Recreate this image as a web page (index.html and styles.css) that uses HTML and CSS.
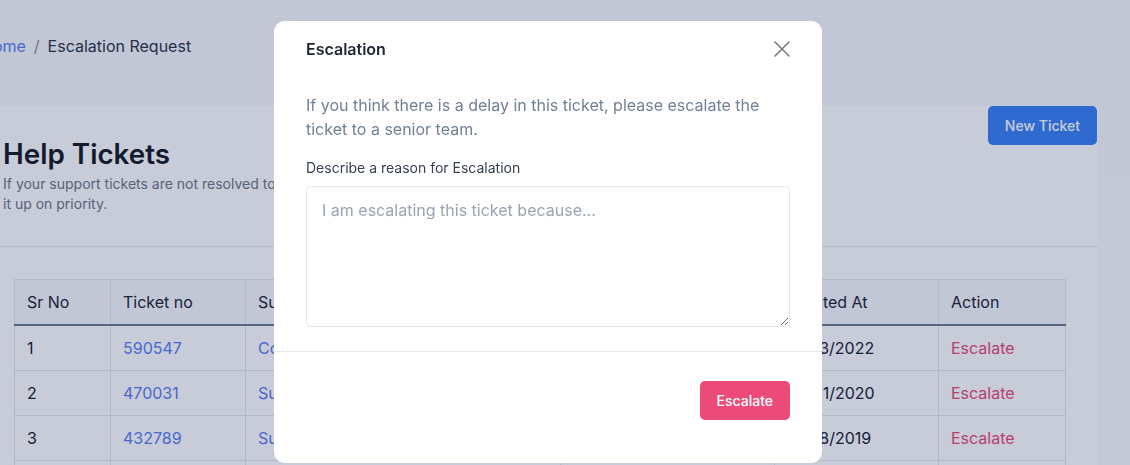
FILE: index.html
```html
<!DOCTYPE html>
<html lang="en">
<head>
<meta charset="utf-8">
<title>Escalation Request</title>
<link rel="stylesheet" href="styles.css">
</head>
<body>
<div class="page">
  <nav class="breadcrumb">
    <a class="crumb-link" href="#">Home</a><span class="crumb-sep">/</span><span class="crumb-current">Escalation Request</span>
  </nav>
  <div class="main">
    <section class="card">
      <header class="card-header">
        <div class="card-titles">
          <h1 class="card-title">Help Tickets</h1>
          <p class="card-sub">If your support tickets are not resolved to your satisfaction, escalate them and our team will pick<br>it up on priority.</p>
        </div>
        <button class="btn btn-blue" type="button">New Ticket</button>
      </header>
      <div class="table-wrap">
        <table class="tickets">
          <colgroup>
            <col class="c-sr"><col class="c-no"><col class="c-subj"><col class="c-status"><col class="c-date"><col class="c-act">
          </colgroup>
          <thead>
            <tr><th>Sr No</th><th>Ticket no</th><th>Subject</th><th>Status</th><th>Created At</th><th>Action</th></tr>
          </thead>
          <tbody>
            <tr><td>1</td><td><a class="link" href="#">590547</a></td><td><a class="link" href="#">Could not access my account</a></td><td>Open</td><td>12/03/2022</td><td><a class="link-pink" href="#">Escalate</a></td></tr>
            <tr><td>2</td><td><a class="link" href="#">470031</a></td><td><a class="link" href="#">Subscription not renewed</a></td><td>Open</td><td>24/01/2020</td><td><a class="link-pink" href="#">Escalate</a></td></tr>
            <tr><td>3</td><td><a class="link" href="#">432789</a></td><td><a class="link" href="#">Support for invoice export</a></td><td>Open</td><td>16/08/2019</td><td><a class="link-pink" href="#">Escalate</a></td></tr>
            <tr class="row-empty"><td></td><td></td><td></td><td></td><td></td><td></td></tr>
          </tbody>
        </table>
      </div>
    </section>
    <div class="side"></div>
  </div>
</div>

<div class="overlay"></div>

<div class="modal" role="dialog" aria-labelledby="modal-title">
  <div class="modal-header">
    <h2 class="modal-title" id="modal-title">Escalation</h2>
    <button class="modal-close" type="button" aria-label="Close">
      <svg width="16" height="16" viewBox="0 0 16 16"><path d="M1 1 L15 15 M15 1 L1 15" stroke="#777b82" stroke-width="1.6" stroke-linecap="round" fill="none"/></svg>
    </button>
  </div>
  <div class="modal-body">
    <p class="modal-text">If you think there is a delay in this ticket, please escalate the ticket to a senior team.</p>
    <label class="field-label" for="reason">Describe a reason for Escalation</label>
    <textarea class="field" id="reason" placeholder="I am escalating this ticket because..."></textarea>
  </div>
  <div class="modal-footer">
    <button class="btn btn-pink" type="button">Escalate</button>
  </div>
</div>
</body>
</html>
```
FILE: styles.css
```css
* { box-sizing: border-box; }

html, body {
  margin: 0;
  padding: 0;
  height: 100%;
  overflow: hidden;
}

body {
  font-family: Inter, "Noto Sans", "Liberation Sans", sans-serif;
  background: #f7f9fb;
  color: #1a202c;
}

.page {
  margin-left: -32px;
  width: 1162px;
}

/* breadcrumb */
.breadcrumb {
  height: 106px;
  padding: 34px 0 0 13px;
  font-size: 16px;
  line-height: 24px;
}
.crumb-link { color: #5b7ef2; text-decoration: none; }
.crumb-sep { color: #8a94a6; margin: 0 8px; }
.crumb-current { color: #2d3748; }

/* main area */
.main {
  display: flex;
  align-items: flex-start;
}

.card {
  flex: none;
  width: 1130px;
  height: 380px;
  background: #ffffff;
}

.side {
  flex: 1;
  margin-top: 71px;
  height: 320px;
  background: #fbfbfd;
}

.card-header {
  display: flex;
  justify-content: space-between;
  align-items: flex-start;
  padding: 0 1px 32px 35px;
  border-bottom: 1px solid #e6e9ef;
}

.card-titles { padding-top: 30px; }

.card-title {
  margin: 0;
  font-size: 27.8px;
  line-height: 36px;
  font-weight: 600;
  color: #161b26;
}

.card-sub {
  margin: 2px 0 0;
  font-size: 14px;
  line-height: 20px;
  color: #6e7787;
}

.btn {
  border: 0;
  border-radius: 5px;
  font-family: inherit;
  font-size: 14px;
  font-weight: 500;
  line-height: 19px;
  padding: 10px 17px;
  color: #ffffff;
  cursor: pointer;
}
.btn-blue { background: #3b82f6; }
.btn-pink { background: #ec4a78; }

/* table */
.table-wrap {
  padding: 32px 0 0 46px;
}

.tickets {
  width: 1051px;
  table-layout: fixed;
  border-collapse: collapse;
  font-size: 16px;
  line-height: 20px;
}

.c-sr { width: 96px; }
.c-no { width: 135px; }
.c-subj { width: 315px; }
.c-status { width: 214px; }
.c-date { width: 164px; }
.c-act { width: 127px; }

.tickets th,
.tickets td {
  text-align: left;
  padding: 12px 12px;
  border: 1px solid #e3e7ee;
  white-space: nowrap;
  overflow: hidden;
}

.tickets .row-empty td { height: 45px; }

.tickets th {
  font-weight: 400;
  background: #f7f9fb;
  color: #1f2633;
  border-bottom: 2px solid #6f7b8f;
}

.tickets td { color: #1a2233; }

.link { color: #5b7ef2; text-decoration: none; }
.link-pink { color: #ec4a78; text-decoration: none; }

/* overlay + modal */
.overlay {
  position: fixed;
  inset: 0;
  background: rgba(5, 23, 78, 0.22);
}

.modal {
  position: fixed;
  top: 21px;
  left: 274px;
  width: 548px;
  background: #ffffff;
  border-radius: 11px;
}

.modal-header {
  display: flex;
  justify-content: space-between;
  align-items: center;
  padding: 16px 32px 0;
}

.modal-title {
  margin: 0;
  font-size: 16px;
  line-height: 24px;
  font-weight: 600;
  color: #1f2430;
}

.modal-close {
  display: flex;
  border: 0;
  background: none;
  padding: 0;
  cursor: pointer;
}

.modal-body {
  padding: 32px 32px 24px;
  border-bottom: 1px solid #e5e7eb;
}

.modal-text {
  margin: 0 0 17px;
  font-size: 16px;
  line-height: 24px;
  color: #718096;
}

.field-label {
  display: block;
  font-size: 14px;
  line-height: 20px;
  color: #374151;
}

.field {
  display: block;
  width: 100%;
  height: 141px;
  margin-top: 8px;
  padding: 11px 15px;
  border: 1px solid #e5e7eb;
  border-radius: 4px;
  font-family: inherit;
  font-size: 16px;
  line-height: 24px;
  color: #1f2937;
  resize: vertical;
}
.field::placeholder { color: #9aa3b2; }

.modal-footer {
  display: flex;
  justify-content: flex-end;
  padding: 29px 32px 43px;
}
```
